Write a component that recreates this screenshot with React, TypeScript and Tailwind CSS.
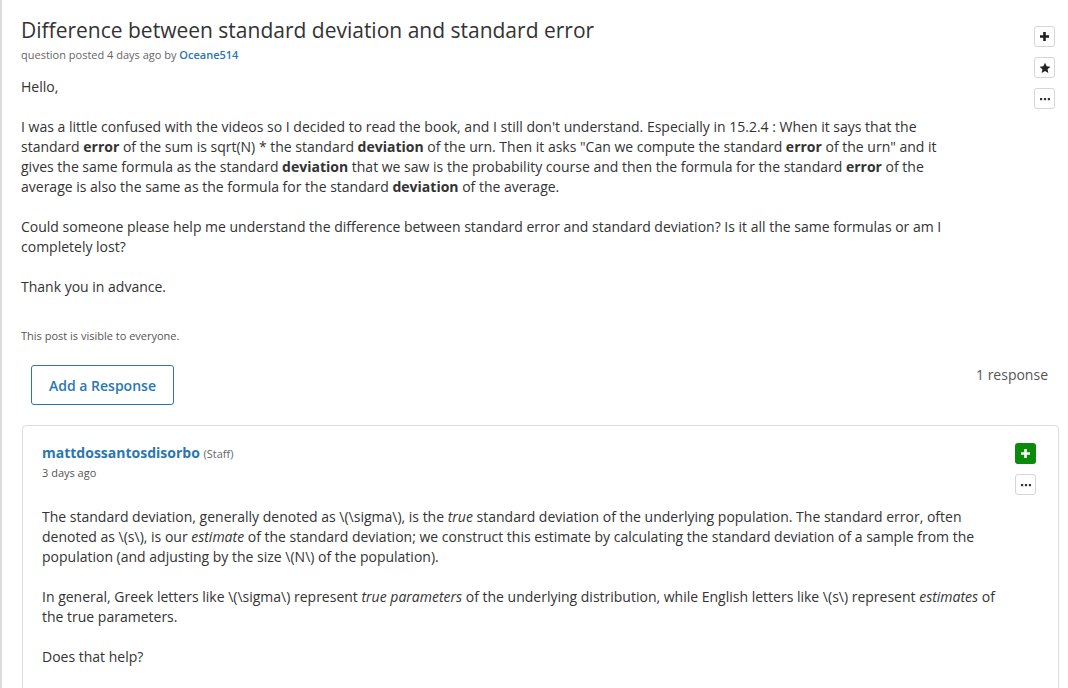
import React from "react";

const font = { fontFamily: '"Open Sans", "Liberation Sans", sans-serif' };

const IconBox = ({ children, green }: { children: React.ReactNode; green?: boolean }) => (
  <div
    className={
      green
        ? "w-[21px] h-[21px] rounded-[3px] bg-[#0b8a0b] flex items-center justify-center"
        : "w-[21px] h-[21px] rounded-[3px] border border-[#d6d6d6] bg-white flex items-center justify-center"
    }
  >
    {children}
  </div>
);

const Plus = ({ color }: { color: string }) => (
  <svg width="11" height="11" viewBox="0 0 11 11">
    <path d="M5.5 1v9M1 5.5h9" stroke={color} strokeWidth="2.6" />
  </svg>
);

const Star = () => (
  <svg width="12" height="12" viewBox="0 0 24 24">
    <path
      d="M12 1.5l3.2 7 7.6.8-5.7 5.1 1.6 7.5L12 18l-6.7 3.9 1.6-7.5L1.2 9.3l7.6-.8z"
      fill="#222"
    />
  </svg>
);

const Dots = () => (
  <svg width="10" height="4" viewBox="0 0 10 4">
    <rect x="0" y="1" width="2.2" height="2.2" fill="#333" />
    <rect x="3.9" y="1" width="2.2" height="2.2" fill="#333" />
    <rect x="7.8" y="1" width="2.2" height="2.2" fill="#333" />
  </svg>
);

export default function App() {
  return (
    <div className="w-[1068px] h-[688px] overflow-hidden bg-white border-l-2 border-[#dcdcdc] text-[#333]" style={font}>
      <div className="flex pl-[19px] pr-[13px] pt-[15px]">
        <div className="flex-1 max-w-[950px]">
          <h1 className="text-[21px] leading-[30px] text-[#333]">
            Difference between standard deviation and standard error
          </h1>
          <div className="text-[11px] leading-[16px] text-[#666] mt-[2px]">
            question posted 4 days ago by{" "}
            <span className="text-[#2a77b0] font-semibold">Oceane514</span>
          </div>
          <div className="text-[14px] leading-[20px] mt-[14px]">
            <p>Hello,</p>
            <p className="mt-[20px]">
              I was a little confused with the videos so I decided to read the book, and I still don't understand.
              Especially in 15.2.4 : When it says that the standard <b>error</b> of the sum is sqrt(N) * the standard{" "}
              <b>deviation</b> of the urn. Then it asks "Can we compute the standard <b>error</b> of the urn" and it
              gives the same formula as the standard <b>deviation</b> that we saw is the probability course and then the
              formula for the standard <b>error</b> of the average is also the same as the formula for the standard{" "}
              <b>deviation</b> of the average.
            </p>
            <p className="mt-[20px]">
              Could someone please help me understand the difference between standard error and standard deviation? Is
              it all the same formulas or am I completely lost?
            </p>
            <p className="mt-[20px]">Thank you in advance.</p>
          </div>
          <div className="text-[11px] leading-[16px] text-[#555] mt-[31px]">This post is visible to everyone.</div>
        </div>
        <div className="ml-auto flex flex-col gap-[10px] mt-[11px]">
          <IconBox>
            <Plus color="#222" />
          </IconBox>
          <IconBox>
            <Star />
          </IconBox>
          <IconBox>
            <Dots />
          </IconBox>
        </div>
      </div>

      <div className="flex items-start justify-between pl-[29px] pr-[20px] mt-[21px]">
        <button className="h-[40px] px-[17px] border border-[#2a77b0] rounded-[3px] text-[14px] font-semibold text-[#2a77b0]">
          Add a Response
        </button>
        <div className="text-[14px] leading-[20px] text-[#555]">1 response</div>
      </div>

      <div className="ml-[20px] mr-[9px] mt-[20px] border border-[#dcdcdc] rounded-t-[4px] h-[300px] flex pl-[19px] pr-[22px] pt-[17px]">
        <div className="flex-1">
          <div className="text-[14px] leading-[20px]">
            <span className="font-bold text-[#2a77b0]">mattdossantosdisorbo</span>{" "}
            <span className="text-[11px] text-[#666]">(Staff)</span>
          </div>
          <div className="text-[11px] leading-[16px] text-[#555] mt-[1px]">3 days ago</div>
          <div className="text-[14px] leading-[20px] mt-[26px] max-w-[965px]">
            <p>
              The standard deviation, generally denoted as \(\sigma\), is the <i>true</i> standard deviation of the
              underlying population. The standard error, often denoted as \(s\), is our <i>estimate</i> of the standard
              deviation; we construct this estimate by calculating the standard deviation of a sample from the
              population (and adjusting by the size \(N\) of the population).
            </p>
            <p className="mt-[20px]">
              In general, Greek letters like \(\sigma\) represent <i>true parameters</i> of the underlying distribution,
              while English letters like \(s\) represent <i>estimates</i> of the true parameters.
            </p>
            <p className="mt-[20px]">Does that help?</p>
          </div>
        </div>
        <div className="flex flex-col gap-[10px] ml-[8px]">
          <IconBox green>
            <Plus color="#fff" />
          </IconBox>
          <IconBox>
            <Dots />
          </IconBox>
        </div>
      </div>
    </div>
  );
}
